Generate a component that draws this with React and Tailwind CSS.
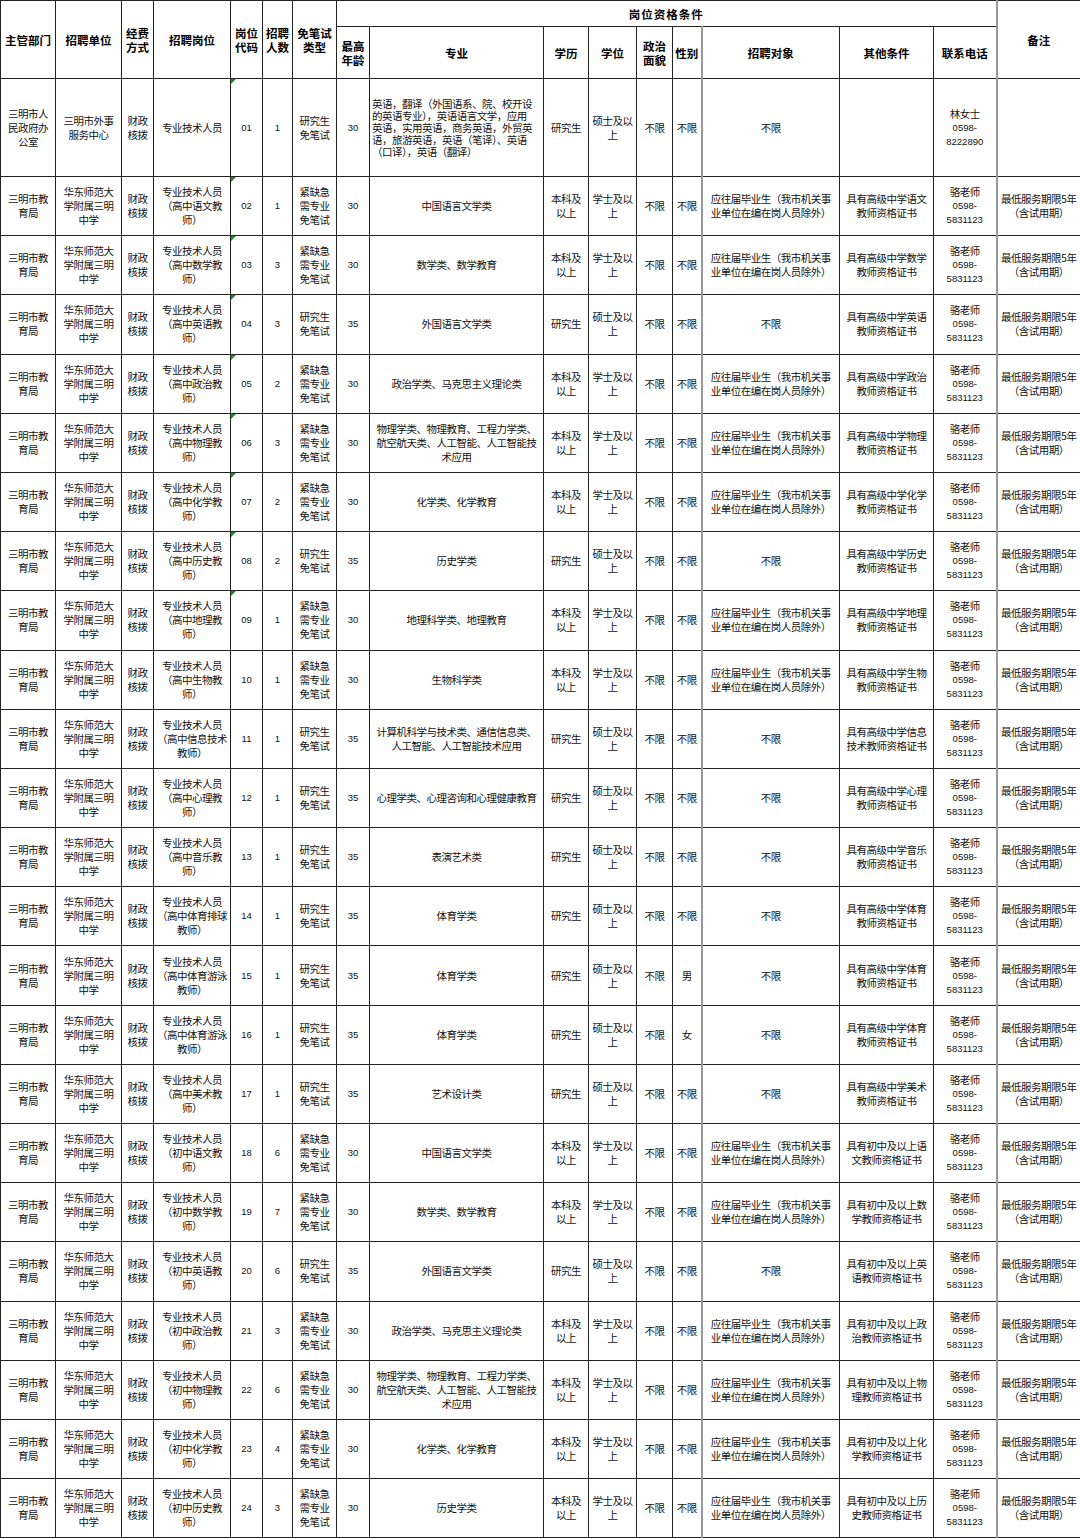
import React from 'react';

const widths = [55, 66, 32, 77, 32, 30, 44, 33, 174, 45, 48, 36, 29, 138, 94, 63, 84];

const A = { type: '紧缺急需专业免笔试', age: '30', edu: '本科及以上', deg: '学士及以上', target: '应往届毕业生（我市机关事业单位在编在岗人员除外）' };
const B = { type: '研究生免笔试', age: '35', edu: '研究生', deg: '硕士及以上', target: '不限' };

const rows = [
  ['02', '高中语文教师', '1', A, '中国语言文学类', '不限', '具有高级中学语文教师资格证书'],
  ['03', '高中数学教师', '3', A, '数学类、数学教育', '不限', '具有高级中学数学教师资格证书'],
  ['04', '高中英语教师', '3', B, '外国语言文学类', '不限', '具有高级中学英语教师资格证书'],
  ['05', '高中政治教师', '2', A, '政治学类、马克思主义理论类', '不限', '具有高级中学政治教师资格证书'],
  ['06', '高中物理教师', '3', A, '物理学类、物理教育、工程力学类、航空航天类、人工智能、人工智能技术应用', '不限', '具有高级中学物理教师资格证书'],
  ['07', '高中化学教师', '2', A, '化学类、化学教育', '不限', '具有高级中学化学教师资格证书'],
  ['08', '高中历史教师', '2', B, '历史学类', '不限', '具有高级中学历史教师资格证书'],
  ['09', '高中地理教师', '1', A, '地理科学类、地理教育', '不限', '具有高级中学地理教师资格证书'],
  ['10', '高中生物教师', '1', A, '生物科学类', '不限', '具有高级中学生物教师资格证书'],
  ['11', '高中信息技术教师', '1', B, '计算机科学与技术类、通信信息类、人工智能、人工智能技术应用', '不限', '具有高级中学信息技术教师资格证书'],
  ['12', '高中心理教师', '1', B, '心理学类、心理咨询和心理健康教育', '不限', '具有高级中学心理教师资格证书'],
  ['13', '高中音乐教师', '1', B, '表演艺术类', '不限', '具有高级中学音乐教师资格证书'],
  ['14', '高中体育排球教师', '1', B, '体育学类', '不限', '具有高级中学体育教师资格证书'],
  ['15', '高中体育游泳教师', '1', B, '体育学类', '男', '具有高级中学体育教师资格证书'],
  ['16', '高中体育游泳教师', '1', B, '体育学类', '女', '具有高级中学体育教师资格证书'],
  ['17', '高中美术教师', '1', B, '艺术设计类', '不限', '具有高级中学美术教师资格证书'],
  ['18', '初中语文教师', '6', A, '中国语言文学类', '不限', '具有初中及以上语文教师资格证书'],
  ['19', '初中数学教师', '7', A, '数学类、数学教育', '不限', '具有初中及以上数学教师资格证书'],
  ['20', '初中英语教师', '6', B, '外国语言文学类', '不限', '具有初中及以上英语教师资格证书'],
  ['21', '初中政治教师', '3', A, '政治学类、马克思主义理论类', '不限', '具有初中及以上政治教师资格证书'],
  ['22', '初中物理教师', '6', A, '物理学类、物理教育、工程力学类、航空航天类、人工智能、人工智能技术应用', '不限', '具有初中及以上物理教师资格证书'],
  ['23', '初中化学教师', '4', A, '化学类、化学教育', '不限', '具有初中及以上化学教师资格证书'],
  ['24', '初中历史教师', '3', A, '历史学类', '不限', '具有初中及以上历史教师资格证书'],
];

const base = 'border border-[#222] text-center align-middle break-all';
const num = 'font-["Liberation_Sans",sans-serif] text-[9.5px] tracking-normal';
const gray = 'border-l-2 border-l-[#999]';
const th = 'border border-[#222] text-center align-middle font-bold text-[11.5px] leading-[14px]';

function C({ pad = 'px-[4px]', lead = 'leading-[14px]', className = '', children }) {
  return <td className={`${base} ${pad} ${lead} ${className}`}>{children}</td>;
}

function Mark() {
  return <span className="absolute left-0 top-0 w-0 h-0 border-t-[5px] border-t-[#1f8a2e] border-r-[5px] border-r-transparent" />;
}

function Phone({ name, tel }) {
  const [a, b] = tel.split('-');
  return (
    <div className="leading-[14px]">
      <div>{name}</div>
      <div className={num}>{a}-</div>
      <div className={num}>{b}</div>
    </div>
  );
}

function Row({ r, i }) {
  const [code, post, n, k, major, sex, other] = r;
  return (
    <tr className="h-[59.2px]">
      <C>三明市教育局</C>
      <C>华东师范大学附属三明中学</C>
      <C pad="px-[2px]">财政核拨</C>
      <C pad="px-[2px]">专业技术人员（{post}）</C>
      <C pad="px-[1px]" className={`relative ${num}`}>{i < 8 && <Mark />}{code}</C>
      <C pad="px-[1px]" className={num}>{n}</C>
      <C>{k.type}</C>
      <C pad="px-[1px]" className={num}>{k.age}</C>
      <C>{major}</C>
      <C>{k.edu}</C>
      <C pad="px-[2px]">{k.deg}</C>
      <C pad="px-[2px]">不限</C>
      <C pad="px-[1px]">{sex}</C>
      <C pad="px-[4px]" className={gray}>{k.target}</C>
      <C>{other}</C>
      <C pad="px-[2px]"><Phone name="骆老师" tel="0598-5831123" /></C>
      <C pad="px-[1px]" className={gray}>最低服务期限5年（含试用期）</C>
    </tr>
  );
}

export default function App() {
  return (
    <div className="w-[1080px] h-[1538px] bg-white overflow-hidden text-[#111] font-['Noto_Sans_CJK_SC',sans-serif] text-[10.5px] tracking-[-0.5px]">
      <table className="w-[1080px] table-fixed border-collapse">
        <colgroup>
          {widths.map((w, i) => <col key={i} style={{ width: w }} />)}
        </colgroup>
        <thead className="tracking-normal text-black">
          <tr className="h-[26px]">
            <th rowSpan={2} className={`${th} px-[2px]`}>主管部门</th>
            <th rowSpan={2} className={`${th} px-[2px]`}>招聘单位</th>
            <th rowSpan={2} className={`${th} px-[2px]`}>经费方式</th>
            <th rowSpan={2} className={`${th} px-[2px]`}>招聘岗位</th>
            <th rowSpan={2} className={`${th} px-[2px]`}>岗位代码</th>
            <th rowSpan={2} className={`${th} px-[2px]`}>招聘人数</th>
            <th rowSpan={2} className={`${th} px-[2px]`}>免笔试类型</th>
            <th colSpan={9} className={`${th} tracking-[1px]`}>岗位资格条件</th>
            <th rowSpan={2} className={`${th} ${gray}`}>备注</th>
          </tr>
          <tr className="h-[52px]">
            <th className={`${th} px-[2px]`}>最高年龄</th>
            <th className={th}>专业</th>
            <th className={th}>学历</th>
            <th className={th}>学位</th>
            <th className={`${th} px-[2px]`}>政治面貌</th>
            <th className={`${th} px-[1px]`}>性别</th>
            <th className={`${th} ${gray}`}>招聘对象</th>
            <th className={th}>其他条件</th>
            <th className={th}>联系电话</th>
          </tr>
        </thead>
        <tbody>
          <tr className="h-[98px]">
            <C>三明市人民政府办公室</C>
            <C>三明市外事服务中心</C>
            <C pad="px-[2px]">财政核拨</C>
            <C pad="px-[2px]">专业技术人员</C>
            <C pad="px-[1px]" className={`relative ${num}`}><Mark />01</C>
            <C pad="px-[1px]" className={num}>1</C>
            <C>研究生免笔试</C>
            <C pad="px-[1px]" className={num}>30</C>
            <C pad="pl-[2px] pr-[8px]" lead="leading-[12px]" className="text-left">英语，翻译（外国语系、院、校开设的英语专业），英语语言文学，应用英语，实用英语，商务英语，外贸英语，旅游英语，英语（笔译）、英语（口译），英语（翻译）</C>
            <C>研究生</C>
            <C pad="px-[2px]">硕士及以上</C>
            <C pad="px-[2px]">不限</C>
            <C pad="px-[1px]">不限</C>
            <C className={gray}>不限</C>
            <C></C>
            <C pad="px-[2px]"><Phone name="林女士" tel="0598-8222890" /></C>
            <C className={gray}></C>
          </tr>
          {rows.map((r, i) => <Row key={r[0]} r={r} i={i} />)}
        </tbody>
      </table>
    </div>
  );
}
